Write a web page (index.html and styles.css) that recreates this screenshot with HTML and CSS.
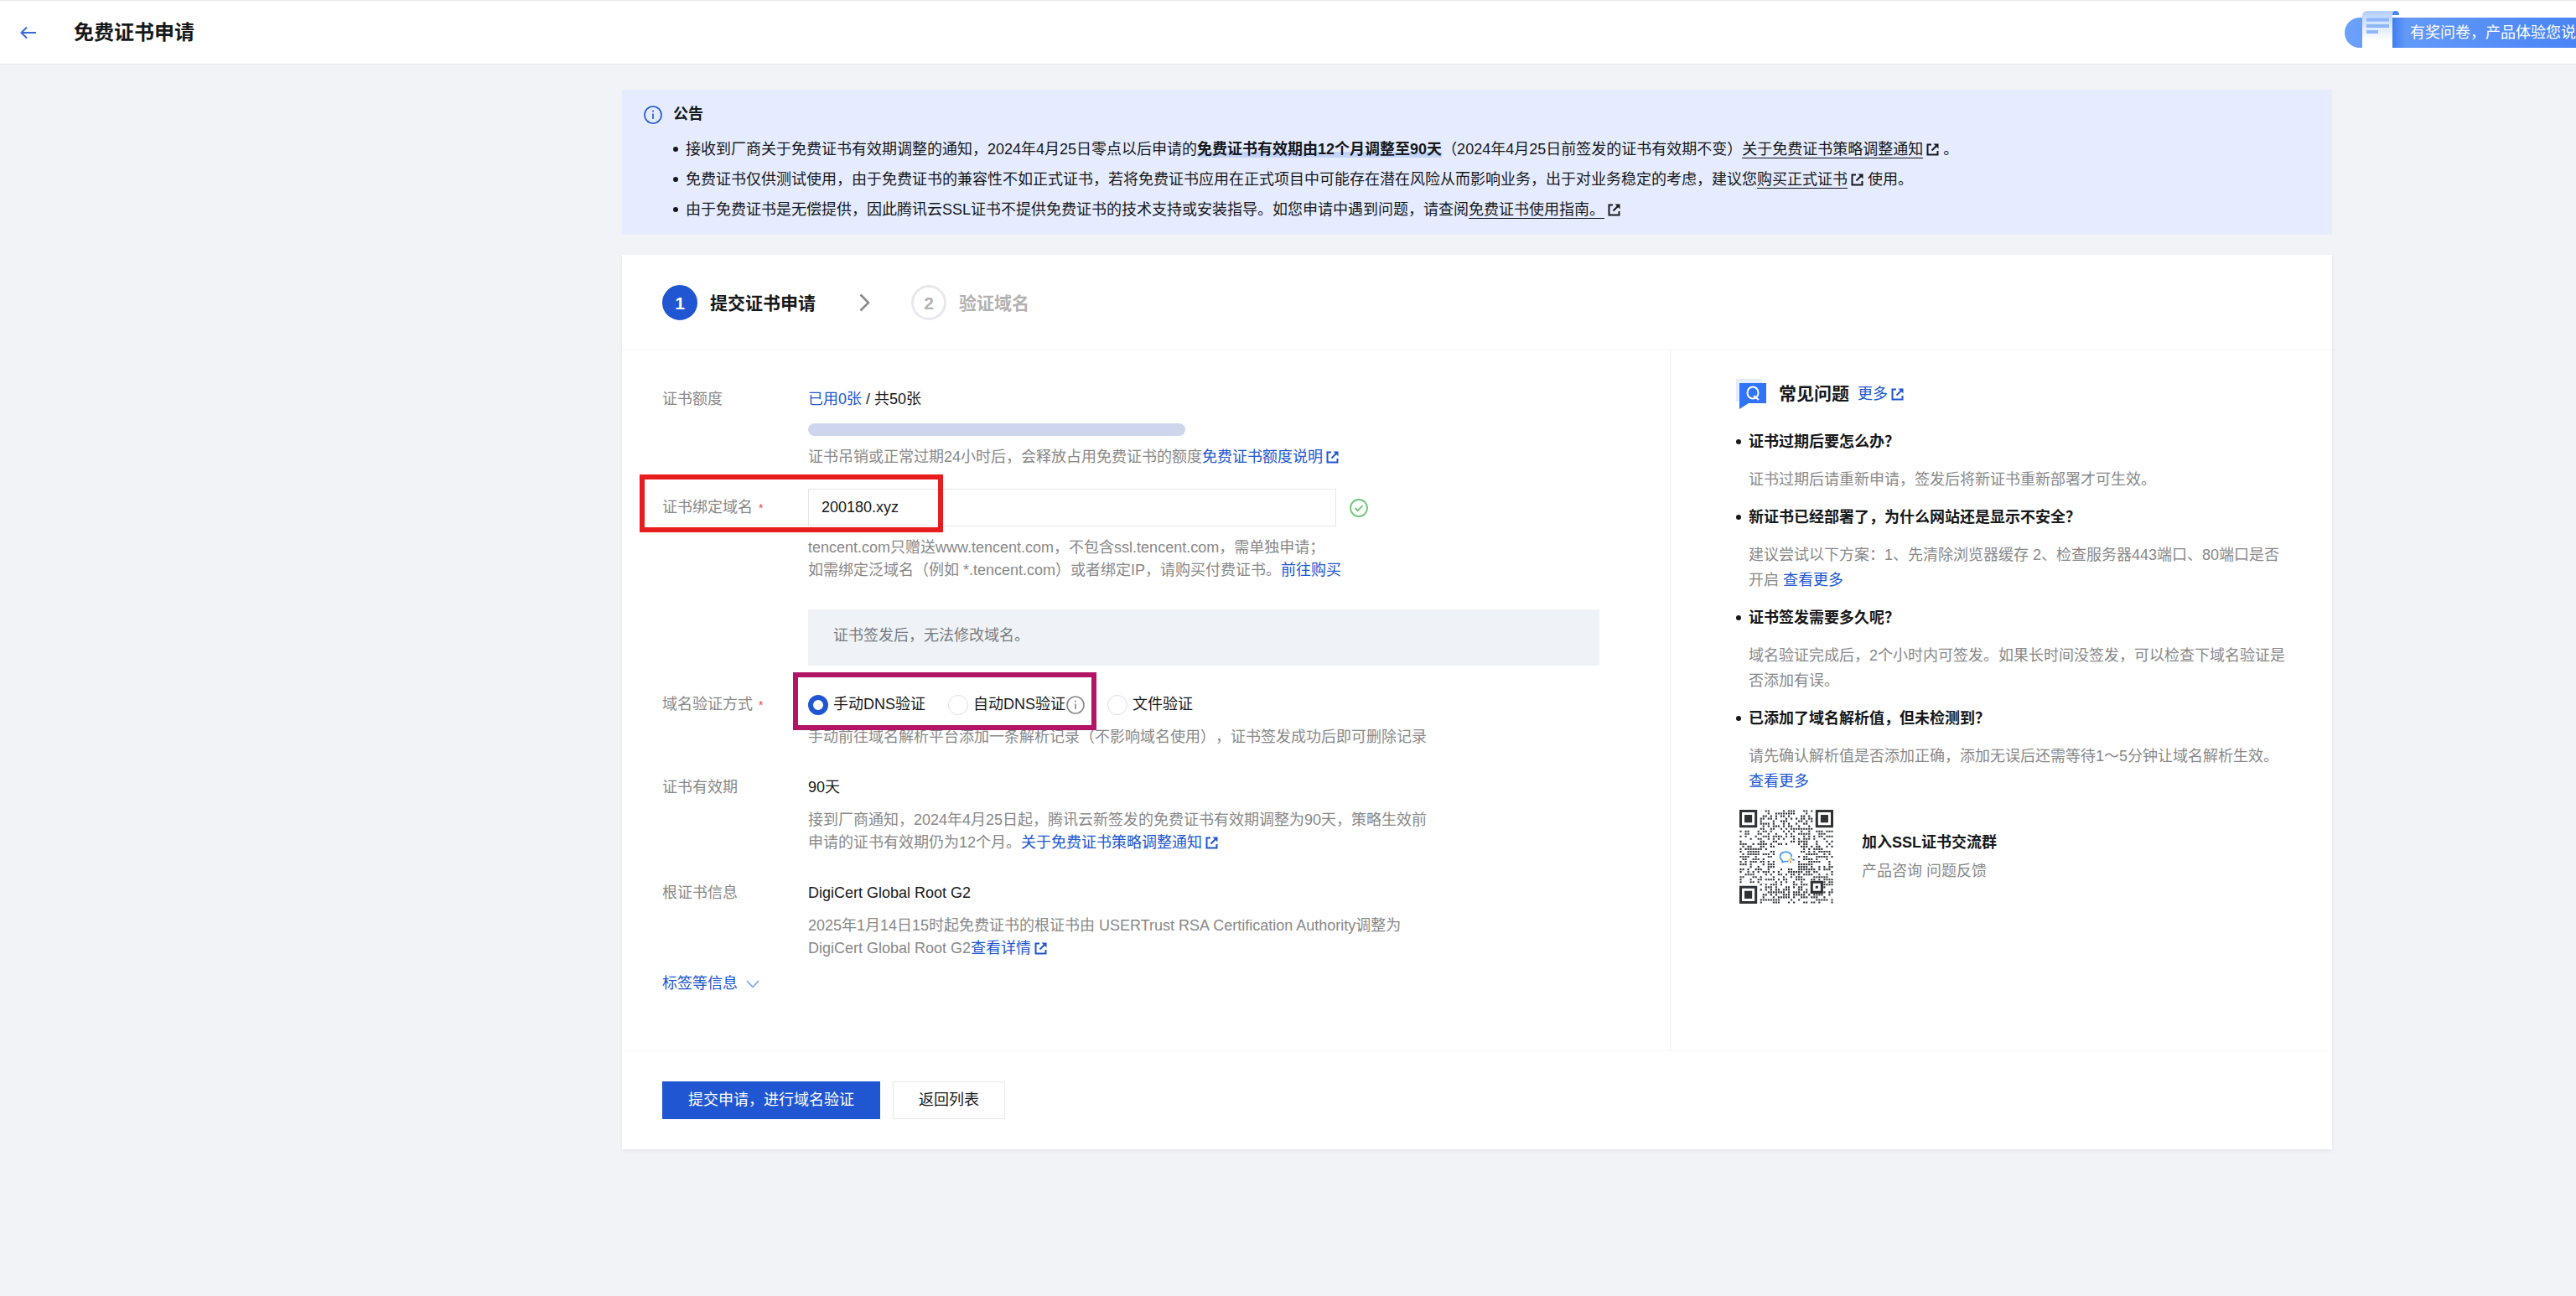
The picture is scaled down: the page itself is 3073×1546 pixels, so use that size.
FILE: index.html
```html
<!doctype html>
<html lang="zh-CN">
  <head>
    <meta charset="UTF-8" />
    <meta name="viewport" content="width=device-width, initial-scale=1.0" />
    <title>免费证书申请</title>
    <link rel="stylesheet" href="styles.css">
  </head>
  <body>
    <svg width="0" height="0" class="sprite" aria-hidden="true">
      <symbol id="icon-ext" viewBox="0 0 15 15">
        <path d="M6 1.5H1.5v12h12V9" fill="none" stroke="currentColor" stroke-width="2" />
        <path d="M6.5 8.5l5.5-5.5" fill="none" stroke="currentColor" stroke-width="2" />
        <path d="M8.5.5h6v6z" fill="currentColor" />
      </symbol>
      <symbol id="icon-info" viewBox="0 0 22 22">
        <circle cx="11" cy="11" r="10" fill="none" stroke="currentColor" stroke-width="1.6" />
        <path d="M11 9.5V16M11 5.5v2" stroke="currentColor" stroke-width="1.6" />
      </symbol>
    </svg>

    <header class="header">
      <a href="#" class="back" aria-label="返回">
        <svg width="20" height="16" viewBox="0 0 20 16">
          <path d="M8 1.5L1.5 8 8 14.5M1.5 8H19" fill="none" stroke="currentColor" stroke-width="2" />
        </svg>
      </a>
      <h1>免费证书申请</h1>
      <a href="#" class="survey">
        <svg class="survey-paper" width="62" height="44" viewBox="0 0 62 44">
          <defs>
            <linearGradient id="paper" x1="0" y1="0" x2="0" y2="1">
              <stop offset="0" stop-color="#b3cffd" />
              <stop offset="0.8" stop-color="#ffffff" />
            </linearGradient>
            <linearGradient id="shade">
              <stop offset="0" stop-color="#3f7fee" />
              <stop offset="1" stop-color="#3f7fee" stop-opacity="0" />
            </linearGradient>
          </defs>
          <path d="M36 8h16v36H36z" fill="url(#shade)" />
          <path d="M0 44V6q0-6 6-6h34q-4 1-4 6v38z" fill="url(#paper)" />
          <path d="M36 5q0-5 4-5t4 5z" fill="#4a87f2" />
          <path d="M5 10.5h27M5 18h27M5 25h14" stroke="#8db6fb" stroke-width="4" />
        </svg>
        有奖问卷，产品体验您说
      </a>
    </header>

    <main class="main">
      <div class="container">
        <section class="notice">
          <h2>
            <svg width="22" height="22"><use href="#icon-info" /></svg>
            公告
          </h2>
          <ul>
            <li>接收到厂商关于免费证书有效期调整的通知，2024年4月25日零点以后申请的<strong>免费证书有效期由12个月调整至90天</strong>（2024年4月25日前签发的证书有效期不变）<a href="#">关于免费证书策略调整通知</a><svg class="ext"><use href="#icon-ext" /></svg> 。</li>
            <li>免费证书仅供测试使用，由于免费证书的兼容性不如正式证书，若将免费证书应用在正式项目中可能存在潜在风险从而影响业务，出于对业务稳定的考虑，建议您<a href="#">购买正式证书</a><svg class="ext"><use href="#icon-ext" /></svg> 使用。</li>
            <li>由于免费证书是无偿提供，因此腾讯云SSL证书不提供免费证书的技术支持或安装指导。如您申请中遇到问题，请查阅<a href="#">免费证书使用指南。</a><svg class="ext"><use href="#icon-ext" /></svg></li>
          </ul>
        </section>

        <div class="card">
          <ol class="steps">
            <li class="active"><span class="num">1</span>提交证书申请</li>
            <li class="arrow" aria-hidden="true">
              <svg width="13" height="22" viewBox="0 0 13 22">
                <path d="M1.5 1.5L11 11l-9.5 9.5" fill="none" stroke="#888" stroke-width="2.5" />
              </svg>
            </li>
            <li><span class="num">2</span>验证域名</li>
          </ol>

          <div class="content">
            <form class="form" id="apply">
              <div class="row">
                <div class="label">证书额度</div>
                <div>
                  <div class="value"><a href="#">已用0张</a> / 共50张</div>
                  <div class="progress" role="progressbar" aria-label="证书额度" aria-valuenow="0" aria-valuemax="50"></div>
                  <p class="help">证书吊销或正常过期24小时后，会释放占用免费证书的额度<a href="#">免费证书额度说明<svg class="ext"><use href="#icon-ext" /></svg></a></p>
                </div>
              </div>

              <div class="row row-domain">
                <span class="mark mark-red"></span>
                <label class="label" for="domain">证书绑定域名<span class="required">*</span></label>
                <div>
                  <div class="field">
                    <input type="text" id="domain" value="200180.xyz" />
                    <svg width="22" height="22" viewBox="0 0 22 22">
                      <circle cx="11" cy="11" r="10" fill="none" stroke="#6cc579" stroke-width="1.8" />
                      <path d="M6.5 11l3.2 3.2L15.5 8" fill="none" stroke="#6cc579" stroke-width="1.8" />
                    </svg>
                  </div>
                  <p class="help">
                    tencent.com只赠送www.tencent.com，不包含ssl.tencent.com，需单独申请；<br />
                    如需绑定泛域名（例如 *.tencent.com）或者绑定IP，请购买付费证书。<a href="#">前往购买</a>
                  </p>
                  <div class="tip">证书签发后，无法修改域名。</div>
                </div>
              </div>

              <div class="row">
                <div class="label" id="verify-label">域名验证方式<span class="required">*</span></div>
                <div>
                  <div class="radios" role="radiogroup" aria-labelledby="verify-label">
                    <span class="mark mark-purple"></span>
                    <label><input type="radio" name="verify" checked />手动DNS验证</label>
                    <label><input type="radio" name="verify" />自动DNS验证<svg class="info" width="22" height="22"><use href="#icon-info" /></svg></label>
                    <label><input type="radio" name="verify" />文件验证</label>
                  </div>
                  <p class="help">手动前往域名解析平台添加一条解析记录（不影响域名使用），证书签发成功后即可删除记录</p>
                </div>
              </div>

              <div class="row">
                <div class="label">证书有效期</div>
                <div>
                  <div class="value">90天</div>
                  <p class="help">接到厂商通知，2024年4月25日起，腾讯云新签发的免费证书有效期调整为90天，策略生效前<br />申请的证书有效期仍为12个月。<a href="#">关于免费证书策略调整通知<svg class="ext"><use href="#icon-ext" /></svg></a></p>
                </div>
              </div>

              <div class="row">
                <div class="label">根证书信息</div>
                <div>
                  <div class="value">DigiCert Global Root G2</div>
                  <p class="help">2025年1月14日15时起免费证书的根证书由 USERTrust RSA Certification Authority调整为<br />DigiCert Global Root G2<a href="#">查看详情<svg class="ext"><use href="#icon-ext" /></svg></a></p>
                </div>
              </div>

              <a href="#" class="more">
                标签等信息
                <svg width="16" height="10" viewBox="0 0 16 10">
                  <path d="M1 1l7 7.5L15 1" fill="none" stroke="#6f9bf5" stroke-width="1.5" />
                </svg>
              </a>
            </form>

            <aside class="faq">
              <h2>
                <svg width="36" height="36" viewBox="0 0 36 36">
                  <path d="M0 0h31v27H0z" fill="#e3edfe" />
                  <path d="M4 5h32v24H15L4 36z" fill="#2f74fa" />
                  <ellipse cx="20" cy="16.500" rx="6.500" ry="7" fill="none" stroke="#fff" stroke-width="2" />
                  <path d="M21 20l6 5" stroke="#fff" stroke-width="2" />
                </svg>
                常见问题
                <a href="#">更多<svg class="ext"><use href="#icon-ext" /></svg></a>
              </h2>
              <ul>
                <li>
                  <h3>证书过期后要怎么办？</h3>
                  <p>证书过期后请重新申请，签发后将新证书重新部署才可生效。</p>
                </li>
                <li>
                  <h3>新证书已经部署了，为什么网站还是显示不安全？</h3>
                  <p>建议尝试以下方案：1、先清除浏览器缓存 2、检查服务器443端口、80端口是否开启 <a href="#">查看更多</a></p>
                </li>
                <li>
                  <h3>证书签发需要多久呢？</h3>
                  <p>域名验证完成后，2个小时内可签发。如果长时间没签发，可以检查下域名验证是否添加有误。</p>
                </li>
                <li>
                  <h3>已添加了域名解析值，但未检测到？</h3>
                  <p>请先确认解析值是否添加正确，添加无误后还需等待1～5分钟让域名解析生效。<a href="#">查看更多</a></p>
                </li>
              </ul>
              <div class="group">
                <svg id="qr" width="112" height="112" viewBox="0 0 37 37" role="img" aria-label="SSL证书交流群二维码">
                  <path id="qr-dots" d="" fill="#33363b" />
                  <g fill="none" stroke="#2e3136">
                    <path d="M.5.5h6v6h-6zM30.5.5h6v6h-6zM.5 30.5h6v6h-6zM28.5 28.5h4v4h-4z" />
                  </g>
                  <path d="M2 2h3v3H2zM32 2h3v3h-3zM2 32h3v3H2zM30 30h1v1h-1z" fill="#2e3136" />
                  <path d="M20.6 18.500a2.300 1.900 0 1 0-3.700 1.500v.7l1-.4h1.500" fill="none" stroke="#3b8cf0" stroke-width=".5" />
                  <path d="M20.400 18.700v1" stroke="#7cc142" stroke-width=".6" />
                  <path d="M20.900 19.700h.8" stroke="#2f7de8" stroke-width=".6" />
                  <path d="M20.200 20v.9" stroke="#f2803a" stroke-width=".6" />
                  <path d="M19.300 19.700h.7" stroke="#f7c53b" stroke-width=".6" />
                </svg>
                <div>
                  <strong>加入SSL证书交流群</strong>
                  <span>产品咨询 问题反馈</span>
                </div>
              </div>
            </aside>
          </div>

          <footer class="actions">
            <button type="submit" form="apply" class="btn btn-primary">提交申请，进行域名验证</button>
            <button type="button" class="btn">返回列表</button>
          </footer>
        </div>
      </div>
    </main>

    <script src="script.js"></script>
  </body>
</html>
```
FILE: styles.css
```css
* {
  box-sizing: border-box;
}

body {
  margin: 0;
  background: #f2f3f7;
  color: #16181a;
  font-family: 'Liberation Sans', 'Noto Sans CJK SC', sans-serif;
  font-size: 18px;
  line-height: 27px;
  text-spacing-trim: space-all;
}

h1,
h2,
h3,
p,
ul,
ol {
  margin: 0;
  padding: 0;
}

ol {
  list-style: none;
}

a {
  color: #2056d2;
  text-decoration: none;
}

.sprite {
  position: absolute;
}

.ext {
  width: 15px;
  height: 15px;
  margin-left: 4px;
  vertical-align: -2px;
}

/* header */
.header {
  display: flex;
  align-items: center;
  height: 77px;
  padding-left: 24px;
  background: #fff;
  border-top: 1px solid #e7e8ee;
  border-bottom: 1px solid #e7e8ee;
}

.back {
  display: flex;
  margin-right: 44px;
  color: #3a68dc;
}

.header h1 {
  font-size: 24px;
  line-height: 36px;
}

.survey {
  position: relative;
  height: 36px;
  margin-left: auto;
  padding-left: 78px;
  border-radius: 18px 0 0 18px;
  background: linear-gradient(90deg, #6ba1fa, #4a84f7);
  color: #fff;
  line-height: 36px;
  white-space: nowrap;
}

.survey-paper {
  position: absolute;
  left: 21px;
  bottom: 0;
}

.main {
  padding: 30px 0 48px 451px;
}

.container {
  max-width: 2040px;
  margin: 0 auto;
}

.notice {
  padding: 16px 26px 12px;
  background: #e5ecff;
}

.notice h2 {
  display: flex;
  align-items: center;
  gap: 13px;
  font-size: 18px;
  line-height: 27px;
}

.notice h2 svg {
  color: #2056d2;
}

.notice ul {
  margin-top: 10px;
  list-style: none;
}

.notice li,
.faq li {
  position: relative;
}

.notice li {
  padding-left: 50px;
  line-height: 36px;
}

.notice li::before,
.faq li::before {
  content: '';
  position: absolute;
  top: 15px;
  left: 35px;
  width: 6px;
  height: 6px;
  border-radius: 50%;
  background: #16181a;
}

.notice li a {
  color: inherit;
  border-bottom: 1px solid;
}

.notice strong {
  background: linear-gradient(transparent 65%, #c3d4fa 65%);
}

/* card */
.card {
  margin-top: 24px;
  background: #fff;
  box-shadow: 0 2px 4px rgba(54, 58, 80, 0.08);
}

.steps {
  display: flex;
  align-items: center;
  padding: 36px 48px 35px;
  border-bottom: 1px solid #f8f8fa;
  font-size: 21px;
  font-weight: bold;
  color: #b2b2b2;
}

.steps li {
  display: flex;
  align-items: center;
}

.steps .arrow {
  margin: 0 49px 0 52px;
}

.num {
  display: flex;
  align-items: center;
  justify-content: center;
  width: 42px;
  height: 42px;
  margin-right: 15px;
  border: 3px solid #e7e8ee;
  border-radius: 50%;
}

.steps .active {
  color: #16181a;
}

.active .num {
  border-color: #2056d2;
  background: #2056d2;
  color: #fff;
}

.content {
  display: flex;
  border-bottom: 1px solid #f8f8fa;
}

.form {
  flex: 1;
  padding: 45px 48px 66px;
}

.row {
  display: grid;
  grid-template-columns: 174px 1fr;
  position: relative;
  margin-bottom: 33px;
}

.row:first-child {
  margin-bottom: 24px;
}

.label {
  color: #888;
}

.required {
  margin-left: 7px;
  color: #e54545;
  font-size: 14px;
}

.progress {
  width: 450px;
  height: 15px;
  margin-top: 15px;
  border-radius: 8px;
  background: #ced6ee;
}

.help {
  max-width: 744px;
  margin-top: 12px;
  color: #888;
}

.row-domain .label {
  line-height: 45px;
}

.field {
  display: flex;
  align-items: center;
  gap: 16px;
}

.field input {
  width: 630px;
  height: 45px;
  padding: 0 15px;
  border: 1px solid #e5e7eb;
  background: #fff;
  color: #16181a;
  font: inherit;
}

.tip {
  width: 944px;
  margin-top: 33px;
  padding: 18px 30px 22px;
  background: #eff3f8;
  color: #777b80;
}

.radios {
  display: flex;
  position: relative;
  gap: 27px;
}

.radios label {
  display: flex;
  align-items: center;
}

.radios input {
  appearance: none;
  width: 24px;
  height: 24px;
  margin: 0 6px 0 0;
  border: 1px solid #dcdfe6;
  border-radius: 50%;
  background: #fff;
}

.radios input:checked {
  border: 6px solid #2056d2;
}

.radios .info {
  margin-left: 1px;
  color: #888;
}

/* callout frames drawn over the form */
.mark {
  position: absolute;
  z-index: 1;
  width: 362px;
  height: 69px;
  border: 6px solid;
  pointer-events: none;
}

.mark-red {
  top: -17px;
  left: -27px;
  border-color: #e81c1c;
}

.mark-purple {
  top: -25px;
  left: -18px;
  border-color: #b21466;
}

.more {
  display: flex;
  align-items: center;
  gap: 10px;
  margin-top: -18px;
}

/* faq */
.faq {
  width: 790px;
  padding: 37px 53px 48px 78px;
  border-left: 1px solid #eeeff3;
  line-height: 30px;
}

.faq h2 {
  display: flex;
  align-items: center;
  height: 30px;
  font-size: 21px;
}

.faq h2 svg:first-child {
  margin-right: 15px;
}

.faq h2 a {
  margin-left: 10px;
  font-size: 18px;
  font-weight: normal;
}

.faq ul {
  margin-top: 27px;
  list-style: none;
}

.faq li {
  margin-bottom: 15px;
  padding-left: 15px;
}

.faq li::before {
  top: 12px;
  left: 0;
}

.faq h3 {
  margin-bottom: 15px;
  font-size: 18px;
}

.faq p {
  color: #888;
}

.group {
  display: flex;
  gap: 34px;
  margin-top: 19px;
  padding-left: 4px;
}

.group strong,
.group span {
  display: block;
  margin-top: 24px;
}

.group span {
  margin-top: 4px;
  color: #888;
}

/* footer */
.actions {
  display: flex;
  gap: 15px;
  padding: 36px 48px;
}

.btn {
  height: 45px;
  padding: 0 30px;
  border: 1px solid #e5e7eb;
  background: #fff;
  color: #16181a;
  font: inherit;
}

.btn-primary {
  border-color: #2056d2;
  background: #2056d2;
  color: #fff;
}
```
FILE: script.js
```js
// fills the data area of the QR code around the finder patterns and the logo
const size = 37;
let seed = 20240425;
let d = '';

function bit() {
  seed = (seed * 48271) % 2147483647;
  return seed / 2147483647 < 0.5;
}

function inside(x, y, left, top, w) {
  return x >= left && x < left + w && y >= top && y < top + w;
}

for (let y = 0; y < size; y++) {
  for (let x = 0; x < size; x++) {
    const reserved =
      inside(x, y, 0, 0, 8) ||
      inside(x, y, size - 8, 0, 8) ||
      inside(x, y, 0, size - 8, 8) ||
      inside(x, y, 28, 28, 5) ||
      inside(x, y, 14, 14, 9);
    if (!reserved && bit()) d += `M${x + 0.15} ${y + 0.15}h.7v.7h-.7z`;
  }
}

document.getElementById('qr-dots').setAttribute('d', d);
```
